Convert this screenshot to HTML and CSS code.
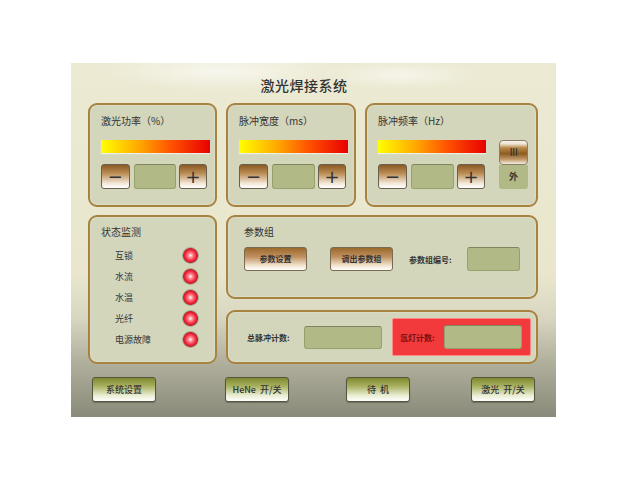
FILE: index.html
```html
<!DOCTYPE html>
<html lang="zh">
<head>
<meta charset="utf-8">
<title>激光焊接系统</title>
<link rel="stylesheet" href="styles.css">
</head>
<body>
<div class="frame">
  <div class="title">激光焊接系统</div>
  <div class="grid">
    <div class="panel p-set">
      <div class="plabel">激光功率（%）</div>
      <div class="bar"></div>
      <div class="ctrl">
        <div class="pm">−</div><div class="disp"></div><div class="pm plus">+</div>
      </div>
    </div>
    <div class="panel p-set">
      <div class="plabel">脉冲宽度（ms）</div>
      <div class="bar"></div>
      <div class="ctrl">
        <div class="pm">−</div><div class="disp"></div><div class="pm plus">+</div>
      </div>
    </div>
    <div class="panel p-set p-freq">
      <div class="freq-main">
        <div class="plabel">脉冲频率（Hz）</div>
        <div class="bar"></div>
        <div class="ctrl">
          <div class="pm">−</div><div class="disp"></div><div class="pm plus">+</div>
        </div>
      </div>
      <div class="side">
        <div class="side-btn">III</div>
        <div class="side-box">外</div>
      </div>
    </div>

    <div class="panel p-status">
      <div class="plabel">状态监测</div>
      <div class="rows">
        <div class="row"><span class="rl">互锁</span><span class="led"></span></div>
        <div class="row"><span class="rl">水流</span><span class="led"></span></div>
        <div class="row"><span class="rl">水温</span><span class="led"></span></div>
        <div class="row"><span class="rl">光纤</span><span class="led"></span></div>
        <div class="row"><span class="rl">电源故障</span><span class="led"></span></div>
      </div>
    </div>

    <div class="right">
      <div class="panel p-param">
        <div class="plabel">参数组</div>
        <div class="param-row">
          <div class="bbtn">参数设置</div>
          <div class="bbtn b2">调出参数组</div>
          <span class="small lbl-no">参数组编号:</span>
          <div class="disp disp-no"></div>
        </div>
      </div>
      <div class="panel p-count">
        <span class="small lbl-total">总脉冲计数:</span>
        <div class="disp disp-total"></div>
        <div class="redbox">
          <span class="small red-lbl">氙灯计数:</span>
          <div class="disp disp-xe"></div>
        </div>
      </div>
    </div>
  </div>
  <div class="bottom">
    <div class="obtn ob1">系统设置</div>
    <div class="obtn ob2">HeNe&nbsp; 开/关</div>
    <div class="obtn ob3">待&nbsp; 机</div>
    <div class="obtn ob4">激光&nbsp; 开/关</div>
  </div>
</div>
</body>
</html>
```

FILE: styles.css
```css
* { box-sizing: border-box; }
html, body { margin: 0; padding: 0; background: #ffffff; }
body {
  font-family: "Noto Sans CJK SC", "Noto Sans", sans-serif;
  color: #333;
  width: 640px;
  height: 480px;
  overflow: hidden;
}
.frame {
  margin: 63px 0 0 71px;
  width: 485px;
  height: 354px;
  background:
    radial-gradient(ellipse 120px 20px at 150px 8px, rgba(255,255,255,0.6), rgba(255,255,255,0) 100%),
    radial-gradient(ellipse 80px 14px at 330px 12px, rgba(255,255,255,0.5), rgba(255,255,255,0) 100%),
    linear-gradient(to bottom, #ecead3 0%, #e9e6cd 60%, #d8d6c0 72%, #b2b19e 84%, #8a8a7a 100%);
  display: flex;
  flex-direction: column;
  padding: 0 18px 0 17px;
}
.title {
  height: 40px;
  text-align: center;
  font-size: 14px;
  font-weight: 500;
  line-height: 44px;
  color: #333;
  padding-right: 18px;
  letter-spacing: 0.5px;
}
.grid {
  display: grid;
  grid-template-columns: 129px 130px 173px;
  grid-template-rows: 104px 149px;
  column-gap: 9px;
  row-gap: 8px;
}
.panel {
  background: #d3d6bb;
  border: 2px solid #a88240;
  border-radius: 9px;
  box-shadow: inset 0 0 2px rgba(255,255,255,0.6);
}
.plabel {
  font-size: 10px;
  line-height: 12px;
  height: 12px;
  color: #333;
}
.p-set { padding: 10px 8px 0 11px; }
.bar {
  margin-top: 13px;
  height: 13px;
  width: 109px;
  background: linear-gradient(to right, #ffff00 0%, #ffa800 35%, #ff5000 65%, #e80000 100%);
  box-shadow: 0 1px 1px rgba(255,255,255,0.6);
}
.ctrl {
  margin-top: 11px;
  display: flex;
  height: 25px;
  gap: 3px;
}
.pm {
  width: 29px;
  height: 25px;
  border: 1px solid #6a6050;
  border-radius: 3px;
  background: linear-gradient(to bottom, #8a5a22 0%, #b98a52 35%, #f3e8d8 80%, #ffffff 100%);
  font-family: "DejaVu Sans", sans-serif;
  font-size: 18px;
  line-height: 23px;
  text-align: center;
  color: #333;
}
.plus { width: 28px; }
.disp {
  background: #b1b986;
  border: 1px solid #98a06e;
  border-top-color: #7f855c;
  border-radius: 3px;
}
.ctrl .disp { width: 43px; height: 25px; margin-left: 1px; }
.p-freq { display: flex; }
.freq-main { width: 108px; }
.freq-main .bar { width: 108px; }
.side {
  margin-left: 13px;
  margin-top: 25px;
  width: 29px;
  display: flex;
  flex-direction: column;
}
.side-btn {
  height: 25px;
  border: 1px solid #8a7c68;
  border-radius: 4px;
  background: linear-gradient(to bottom, #f7f2ea 0%, #f0e6d6 12%, #b88848 30%, #8c5b22 55%, #c19a68 80%, #f5efe4 100%);
  font-family: "DejaVu Sans", sans-serif;
  font-size: 11px;
  text-align: center;
  line-height: 23px;
  color: #333;
  letter-spacing: -0.5px;
}
.side-box {
  height: 24px;
  background: #b1b986;
  border-radius: 0 0 3px 3px;
  font-size: 9px;
  font-weight: bold;
  text-align: center;
  line-height: 24px;
  color: #333;
}
.p-status { padding: 9px 8px 0 11px; }
.rows { margin-top: 7px; padding-left: 14px; }
.row {
  display: flex;
  align-items: center;
  height: 21px;
}
.rl {
  width: 67px;
  font-size: 9px;
  color: #333;
}
.led {
  width: 17px;
  height: 17px;
  border-radius: 50%;
  background: radial-gradient(circle at 50% 50%, #fff4f4 0%, #ff7a86 22%, #f0283c 45%, #d0182c 58%, #9aa888 64%, #c6d2ae 82%, #e4ecd4 100%);
}
.right {
  grid-column: 2 / 4;
  display: flex;
  flex-direction: column;
  gap: 11px;
}
.p-param {
  height: 84px;
  padding: 9px 10px 0 16px;
}
.param-row {
  margin-top: 9px;
  display: flex;
  align-items: center;
}
.bbtn {
  width: 63px;
  height: 24px;
  border: 1px solid #7a6a52;
  border-radius: 3px;
  background: linear-gradient(to bottom, #9c6a2c 0%, #c09060 40%, #efe2cc 78%, #ffffff 100%);
  font-size: 8px;
  font-weight: bold;
  text-align: center;
  line-height: 22px;
  color: #333;
}
.b2 { margin-left: 23px; }
.small {
  font-size: 8px;
  font-weight: bold;
  color: #333;
}
.lbl-no { margin-left: 16px; width: 58px; }
.disp-no { width: 53px; height: 24px; }
.p-count {
  height: 54px;
  display: flex;
  align-items: center;
  padding-left: 19px;
}
.lbl-total { width: 57px; }
.disp-total { width: 78px; height: 23px; }
.redbox {
  margin-left: 10px;
  width: 139px;
  height: 38px;
  background: #f23a3c;
  border: 1px solid #f88;
  border-radius: 2px;
  display: flex;
  align-items: center;
  padding-left: 7px;
}
.red-lbl { color: #7a1010; width: 44px; }
.disp-xe { width: 78px; height: 24px; }
.bottom {
  display: flex;
  margin-top: 13px;
}
.obtn {
  width: 64px;
  height: 25px;
  border: 1px solid #55553f;
  border-radius: 3px;
  background: linear-gradient(to bottom, #7f8a2e 0%, #a8b060 35%, #e8ecd0 75%, #ffffff 100%);
  font-size: 9px;
  font-weight: 500;
  text-align: center;
  line-height: 23px;
  color: #333;
  box-shadow: 0 1px 1px rgba(0,0,0,0.25);
}
.ob1 { margin-left: 4px; }
.ob2 { margin-left: 69px; }
.ob3 { margin-left: 57px; }
.ob4 { margin-left: 61px; }
```
